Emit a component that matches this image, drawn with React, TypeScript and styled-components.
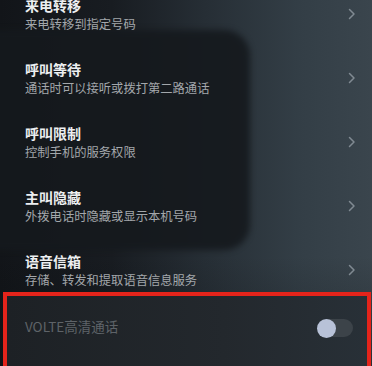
import React from 'react'
import styled, { createGlobalStyle } from 'styled-components'

const GlobalStyle = createGlobalStyle`
  html, body {
    margin: 0;
    padding: 0;
    background: #15181c;
  }
  body {
    font-family: "Noto Sans CJK SC", "Noto Sans", sans-serif;
  }
`

const Screen = styled.div`
  position: relative;
  width: 372px;
  height: 366px;
  overflow: hidden;
  background:
    linear-gradient(180deg, rgba(0, 0, 0, 0) 70%, rgba(10, 12, 14, 0.35) 100%),
    linear-gradient(90deg, #121519 0%, #181c21 30%, #262e35 55%, #333e46 80%, #3a454d 100%);

  /* dark reflection on the glass */
  &::before {
    content: '';
    position: absolute;
    left: -40px;
    top: 30px;
    width: 290px;
    height: 220px;
    border-radius: 26px;
    background: #15191d;
    filter: blur(3px);
    opacity: 0.9;
  }
`

const List = styled.div`
  position: relative;
  display: flex;
  flex-direction: column;
  margin-top: -18px;
`

const Row = styled.div`
  display: flex;
  align-items: center;
  height: 64px;
  padding: 0 16px 0 25px;
  box-sizing: border-box;
`

const RowText = styled.div`
  flex: 1;
  display: flex;
  flex-direction: column;
  gap: 2px;
`

const Title = styled.div`
  font-size: 14px;
  line-height: 18px;
  font-weight: 700;
  color: #eceef0;
`

const Subtitle = styled.div`
  font-size: 12.3px;
  line-height: 16px;
  color: #a3a7ab;
  white-space: nowrap;
`

const Chevron = styled.svg`
  width: 8px;
  height: 12px;
  flex: none;
`

const Highlight = styled.div`
  position: relative;
  display: flex;
  align-items: flex-start;
  justify-content: space-between;
  margin: -10px 1px 0 3px;
  height: 90px;
  padding: 21px 14px 0 18px;
  border: 4px solid #e5241b;
  border-bottom: none;
  background: linear-gradient(90deg, #1d2125 0%, #23282d 60%, #283037 100%);
`

const VolteLabel = styled.div`
  font-size: 13.5px;
  line-height: 18px;
  color: #5e6368;
`

const Switch = styled.div`
  position: relative;
  width: 35px;
  height: 18px;
  margin-top: 2px;
  border-radius: 9px;
  background: #3c4349;
`

const Knob = styled.div`
  position: absolute;
  left: -1px;
  top: -0.5px;
  width: 19px;
  height: 19px;
  border-radius: 50%;
  background: #b8c2d8;
`

const items = [
  { title: '来电转移', desc: '来电转移到指定号码' },
  { title: '呼叫等待', desc: '通话时可以接听或拨打第二路通话' },
  { title: '呼叫限制', desc: '控制手机的服务权限' },
  { title: '主叫隐藏', desc: '外拨电话时隐藏或显示本机号码' },
  { title: '语音信箱', desc: '存储、转发和提取语音信息服务' },
]

export default function App() {
  return (
    <>
      <GlobalStyle />
      <Screen>
        <List>
          {items.map((item) => (
            <Row key={item.title}>
              <RowText>
                <Title>{item.title}</Title>
                <Subtitle>{item.desc}</Subtitle>
              </RowText>
              <Chevron viewBox="0 0 8 12">
                <path d="M1.5 1.5 L6 6 L1.5 10.5" fill="none" stroke="#808a92" strokeWidth="1.5" strokeLinecap="round" strokeLinejoin="round" />
              </Chevron>
            </Row>
          ))}
        </List>
        <Highlight>
          <VolteLabel>VOLTE高清通话</VolteLabel>
          <Switch>
            <Knob />
          </Switch>
        </Highlight>
      </Screen>
    </>
  )
}
